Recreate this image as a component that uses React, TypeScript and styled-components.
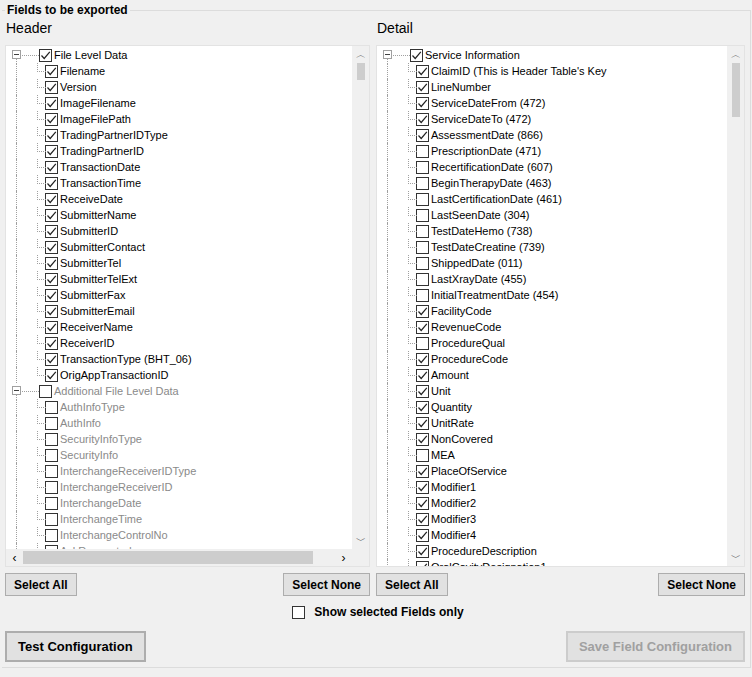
import React, { useState } from 'react';
import styled, { createGlobalStyle } from 'styled-components';

const Global = createGlobalStyle`
  body { margin: 0; background: #f0f0f0; font-family: "Liberation Sans", Arial, sans-serif; font-size: 12px; color: #000; }
`;

const Page = styled.div`
  width: 752px;
  height: 677px;
  overflow: hidden;
  padding-top: 3px;
  box-sizing: border-box;
`;

const Group = styled.fieldset`
  margin: 0 2px 0 2px;
  padding: 0 5px 0 3px;
  border: 1px solid #dcdcdc;
  border-left: none;
  height: 665px;
  box-sizing: border-box;
`;

const Legend = styled.legend`
  font-weight: bold;
  font-size: 12px;
  padding: 0 2px 0 2px;
  margin-left: 0;
`;

const Columns = styled.div`
  display: grid;
  grid-template-columns: 365px 369px;
  column-gap: 6px;
`;

const Col = styled.div`
  display: flex;
  flex-direction: column;
`;

const ColTitle = styled.div`
  font-size: 14px;
  height: 28px;
  line-height: 18px;
  padding-left: 1px;
  padding-top: 2px;
  box-sizing: border-box;
`;

const TreeBox = styled.div`
  height: 522px;
  border: 1px solid #e3e3e3;
  background: #fff;
  display: grid;
  grid-template-columns: 1fr 17px;
  grid-template-rows: ${(p: { hscroll: boolean }) => (p.hscroll ? '1fr 17px' : '1fr')};
  box-sizing: border-box;
`;

const TreeArea = styled.div`
  overflow: hidden;
  padding-top: 1px;
`;

const Row = styled.div<{ disabled?: boolean }>`
  height: 16px;
  display: flex;
  align-items: center;
  white-space: nowrap;
  color: ${(p) => (p.disabled ? '#8a8a8a' : '#000')};
`;

const TopGuide = styled.div`
  width: 33px;
  height: 16px;
  position: relative;
  flex: none;
  &::before {
    content: '';
    position: absolute;
    left: 10px;
    top: 8px;
    bottom: -1px;
    border-left: 1px dotted #a0a0a0;
  }
`;

const Expander = styled.div`
  position: absolute;
  left: 6px;
  top: 3px;
  width: 7px;
  height: 7px;
  border: 1px solid #a0a0a0;
  background: #fff;
  z-index: 1;
  &::after {
    content: '';
    position: absolute;
    left: 1px;
    right: 1px;
    top: 3px;
    border-top: 1px solid #404040;
  }
`;

const Stub = styled.div`
  position: absolute;
  left: 16px;
  right: 0;
  top: 8px;
  border-top: 1px dotted #a0a0a0;
`;

const ChildGuide = styled.div`
  width: 39px;
  height: 16px;
  position: relative;
  flex: none;
  &::before {
    content: '';
    position: absolute;
    left: 10px;
    top: 0;
    bottom: 0;
    border-left: 1px dotted #a0a0a0;
  }
  &::after {
    content: '';
    position: absolute;
    left: 31px;
    top: 0;
    width: 8px;
    height: 8px;
    border-left: 1px dotted #a0a0a0;
    border-bottom: 1px dotted #a0a0a0;
  }
`;

const Box = styled.div`
  width: 11px;
  height: 11px;
  border: 1px solid #333;
  background: #fff;
  flex: none;
  margin-right: 2px;
  display: flex;
  align-items: center;
  justify-content: center;
`;

const Label = styled.span`
  font-size: 11px;
`;

const VScroll = styled.div`
  background: #f0f0f0;
  display: flex;
  flex-direction: column;
  align-items: center;
  font-size: 10px;
  color: #606060;
`;

const Arrow = styled.div`
  height: 17px;
  width: 17px;
  display: flex;
  align-items: center;
  justify-content: center;
  flex: none;
`;

const VThumb = styled.div<{ size: number }>`
  width: 8px;
  height: ${(p) => p.size}px;
  background: #cdcdcd;
`;

const HScroll = styled.div`
  background: #f0f0f0;
  display: flex;
  align-items: center;
`;

const HThumb = styled.div`
  height: 13px;
  width: 290px;
  background: #cdcdcd;
`;

const Corner = styled.div`
  background: #f0f0f0;
`;

const BtnRow = styled.div`
  display: flex;
  justify-content: space-between;
  margin-top: 6px;
`;

const Btn = styled.button<{ big?: boolean; disabledLook?: boolean }>`
  font-family: "Liberation Sans", Arial, sans-serif;
  font-weight: bold;
  font-size: ${(p) => (p.big ? '13px' : '12px')};
  height: ${(p) => (p.big ? '31px' : '23px')};
  padding: 0 ${(p) => (p.big ? '11px' : '8px')};
  background: #e1e1e1;
  border: ${(p) => (p.big ? '2px' : '1px')} solid ${(p) => (p.disabledLook ? '#cccccc' : '#adadad')};
  color: ${(p) => (p.disabledLook ? '#a0a0a0' : '#000')};
  margin: 0;
`;

const ShowRow = styled.label`
  display: flex;
  align-items: center;
  justify-content: center;
  font-weight: bold;
  margin-top: 6px;
  height: 20px;
  padding-left: 6px;
  gap: 7px;
`;

const BottomRow = styled.div`
  display: flex;
  justify-content: space-between;
  margin-top: 9px;
`;

const Check = () => (
  <svg width="11" height="11" viewBox="0 0 11 11">
    <path d="M1.5 5.5 L4.2 8.5 L9.8 1.8" fill="none" stroke="#222" strokeWidth="1.2" />
  </svg>
);

type Item = [string, boolean];

const header: { title: string; checked: boolean; disabled?: boolean; items: Item[] }[] = [
  {
    title: 'File Level Data',
    checked: true,
    items: [
      'Filename', 'Version', 'ImageFilename', 'ImageFilePath', 'TradingPartnerIDType', 'TradingPartnerID',
      'TransactionDate', 'TransactionTime', 'ReceiveDate', 'SubmitterName', 'SubmitterID', 'SubmitterContact',
      'SubmitterTel', 'SubmitterTelExt', 'SubmitterFax', 'SubmitterEmail', 'ReceiverName', 'ReceiverID',
      'TransactionType (BHT_06)', 'OrigAppTransactionID',
    ].map((s) => [s, true] as Item),
  },
  {
    title: 'Additional File Level Data',
    checked: false,
    disabled: true,
    items: [
      'AuthInfoType', 'AuthInfo', 'SecurityInfoType', 'SecurityInfo', 'InterchangeReceiverIDType',
      'InterchangeReceiverID', 'InterchangeDate', 'InterchangeTime', 'InterchangeControlNo', 'AckRequested',
    ].map((s) => [s, false] as Item),
  },
];

const detailItems: Item[] = [
  ["ClaimID (This is Header Table's Key", true], ['LineNumber', true], ['ServiceDateFrom (472)', true],
  ['ServiceDateTo (472)', true], ['AssessmentDate (866)', true], ['PrescriptionDate (471)', false],
  ['RecertificationDate (607)', false], ['BeginTherapyDate (463)', false], ['LastCertificationDate (461)', false],
  ['LastSeenDate (304)', false], ['TestDateHemo (738)', false], ['TestDateCreatine (739)', false],
  ['ShippedDate (011)', false], ['LastXrayDate (455)', false], ['InitialTreatmentDate (454)', false],
  ['FacilityCode', true], ['RevenueCode', true], ['ProcedureQual', false], ['ProcedureCode', true],
  ['Amount', true], ['Unit', true], ['Quantity', true], ['UnitRate', true], ['NonCovered', true],
  ['MEA', false], ['PlaceOfService', true], ['Modifier1', true], ['Modifier2', true], ['Modifier3', true],
  ['Modifier4', true], ['ProcedureDescription', true], ['OralCavityDesignation1', true],
];

const detail = [{ title: 'Service Information', checked: true, items: detailItems }];

const Tree: React.FC<{ groups: typeof header; hscroll: boolean; thumb: number }> = ({ groups, hscroll, thumb }) => (
  <TreeBox hscroll={hscroll}>
    <TreeArea>
      {groups.map((g) => (
        <React.Fragment key={g.title}>
          <Row disabled={g.disabled}>
            <TopGuide>
              <Expander />
              <Stub />
            </TopGuide>
            <Box>{g.checked && <Check />}</Box>
            <Label>{g.title}</Label>
          </Row>
          {g.items.map(([name, on]) => (
            <Row key={name} disabled={g.disabled}>
              <ChildGuide />
              <Box>{on && <Check />}</Box>
              <Label>{name}</Label>
            </Row>
          ))}
        </React.Fragment>
      ))}
    </TreeArea>
    <VScroll>
      <Arrow>︿</Arrow>
      <VThumb size={thumb} />
      <div style={{ flex: 1 }} />
      <Arrow>﹀</Arrow>
    </VScroll>
    {hscroll && (
      <>
        <HScroll>
          <Arrow>‹</Arrow>
          <HThumb />
          <div style={{ flex: 1 }} />
          <Arrow>›</Arrow>
        </HScroll>
        <Corner />
      </>
    )}
  </TreeBox>
);

export default function App() {
  const [showSel, setShowSel] = useState(false);
  return (
    <Page>
      <Global />
      <Group>
        <Legend>Fields to be exported</Legend>
        <Columns>
          <Col>
            <ColTitle>Header</ColTitle>
            <Tree groups={header} hscroll thumb={17} />
            <BtnRow>
              <Btn>Select All</Btn>
              <Btn>Select None</Btn>
            </BtnRow>
          </Col>
          <Col>
            <ColTitle>Detail</ColTitle>
            <Tree groups={detail} hscroll={false} thumb={54} />
            <BtnRow>
              <Btn>Select All</Btn>
              <Btn>Select None</Btn>
            </BtnRow>
          </Col>
        </Columns>
        <ShowRow onClick={() => setShowSel(!showSel)}>
          <Box>{showSel && <Check />}</Box>
          Show selected Fields only
        </ShowRow>
        <BottomRow>
          <Btn big>Test Configuration</Btn>
          <Btn big disabledLook>Save Field Configuration</Btn>
        </BottomRow>
      </Group>
    </Page>
  );
}
